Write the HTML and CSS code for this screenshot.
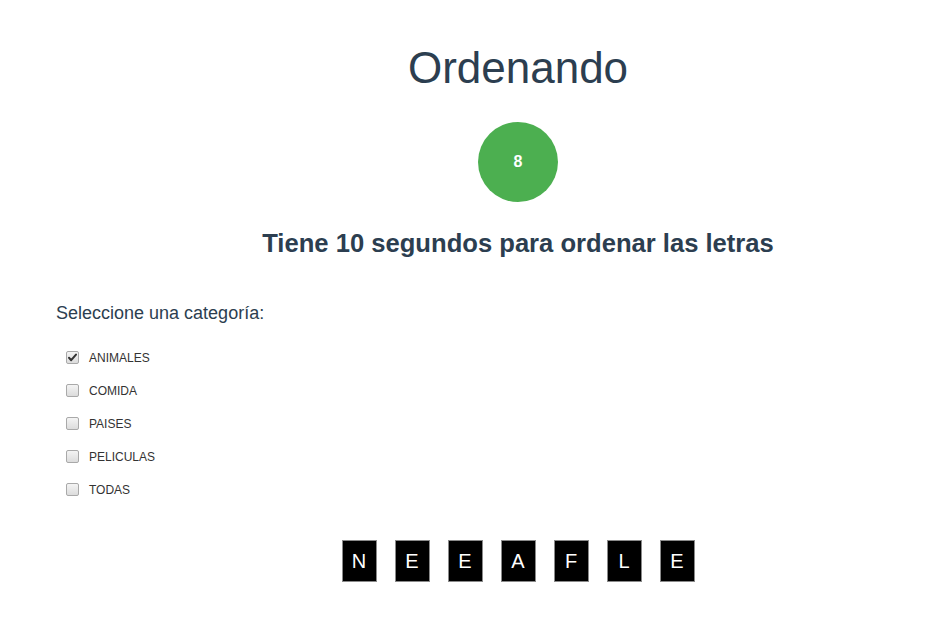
FILE: index.html
```html
<!DOCTYPE html>
<html lang="es">
<head>
<meta charset="utf-8">
<title>Ordenando</title>
<link rel="stylesheet" href="styles.css">
</head>
<body>
<div class="app">
  <div class="center">
    <h1 class="title">Ordenando</h1>
    <div class="timer">8</div>
    <h2 class="subtitle">Tiene 10 segundos para ordenar las letras</h2>
  </div>
  <section class="categories">
    <p class="cat-label">Seleccione una categoría:</p>
    <ul class="cat-list">
      <li class="cat-item"><span class="box checked"><svg viewBox="0 0 13 13" width="13" height="13"><path d="M3 6.8 L5.2 9.2 L10 3.6" fill="none" stroke="#333" stroke-width="2" stroke-linecap="round" stroke-linejoin="round"/></svg></span>ANIMALES</li>
      <li class="cat-item"><span class="box"></span>COMIDA</li>
      <li class="cat-item"><span class="box"></span>PAISES</li>
      <li class="cat-item"><span class="box"></span>PELICULAS</li>
      <li class="cat-item"><span class="box"></span>TODAS</li>
    </ul>
  </section>
  <div class="center">
    <div class="tiles">
      <span class="tile">N</span>
      <span class="tile">E</span>
      <span class="tile">E</span>
      <span class="tile">A</span>
      <span class="tile">F</span>
      <span class="tile">L</span>
      <span class="tile">E</span>
    </div>
  </div>
</div>
</body>
</html>
```

FILE: styles.css
```css
html, body {
  margin: 0;
  padding: 0;
  background: #ffffff;
}
body {
  font-family: "Liberation Sans", Arial, sans-serif;
  color: #2c3e50;
}
.app {
  width: 933px;
}
.center {
  margin-left: 103px;
  display: flex;
  flex-direction: column;
  align-items: center;
  text-align: center;
}
.title {
  margin: 42px 0 0;
  font-size: 44px;
  line-height: 52px;
  font-weight: normal;
}
.timer {
  margin-top: 28px;
  width: 80px;
  height: 80px;
  border-radius: 50%;
  background: #4caf50;
  color: #ffffff;
  font-weight: bold;
  font-size: 16px;
  display: flex;
  align-items: center;
  justify-content: center;
}
.subtitle {
  margin: 26px 0 0;
  font-size: 25.6px;
  line-height: 30px;
  font-weight: bold;
}
.categories {
  margin-left: 56px;
  margin-top: 44px;
}
.cat-label {
  margin: 0;
  font-size: 18px;
  line-height: 22px;
}
.cat-list {
  list-style: none;
  margin: 17px 0 0;
  padding: 0 0 0 10px;
}
.cat-item {
  height: 33px;
  display: flex;
  align-items: center;
  font-size: 12px;
  color: #333;
}
.box {
  width: 11px;
  height: 11px;
  border: 1px solid #a9a9a9;
  border-radius: 2px;
  background: linear-gradient(#f4f4f4, #dcdcdc);
  margin-right: 10px;
  display: inline-flex;
  align-items: center;
  justify-content: center;
  position: relative;
}
.box svg {
  position: absolute;
  left: -1px;
  top: -1px;
}
.tiles {
  margin-top: 34px;
  display: flex;
  gap: 18px;
}
.tile {
  width: 33px;
  height: 40px;
  background: #000;
  border: 1px solid #8a8a8a;
  color: #fff;
  font-size: 20px;
  display: flex;
  align-items: center;
  justify-content: center;
}
```
